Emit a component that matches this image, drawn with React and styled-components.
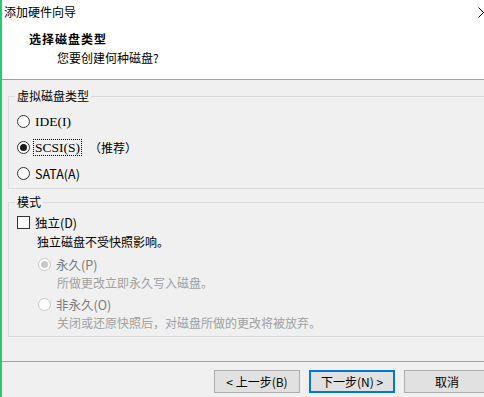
import styled, { createGlobalStyle } from "styled-components";

const GlobalStyle = createGlobalStyle`
  html, body {
    margin: 0;
    padding: 0;
    background: #f0f0f0;
    overflow: hidden;
  }
  body {
    font-family: "Noto Sans CJK SC", "Microsoft YaHei", sans-serif;
    font-size: 12px;
    color: #000;
  }
`;

const Window = styled.div`
  width: 500px;
  height: 397px;
  box-sizing: border-box;
  border-left: 2px solid #1fcf6e;
  background: #f0f0f0;
  display: flex;
  flex-direction: column;
  overflow: hidden;
`;

const TitleBar = styled.div`
  height: 24px;
  background: #fff;
  display: flex;
  align-items: center;
  justify-content: space-between;
  padding: 0 11px 0 2px;
  line-height: 24px;
`;

const Header = styled.div`
  height: 56px;
  box-sizing: border-box;
  background: #fff;
  padding: 7px 0 0 27px;
  border-bottom: 1px solid #a0a0a0;
`;

const HeadTitle = styled.div`
  font-weight: bold;
  line-height: 16px;
  letter-spacing: 1px;
`;

const HeadSub = styled.div`
  margin: 3px 0 0 28px;
  line-height: 16px;
`;

const Content = styled.div`
  padding: 0 6px;
`;

const Group = styled.fieldset`
  margin: ${({ $first }) => ($first ? "8px" : "5px")} 0 0;
  padding: ${({ $first }) => ($first ? "4px 0 2px 8px" : "2px 0 4px 8px")};
  border: 1px solid #dcdcdc;
  min-width: 0;
`;

const Legend = styled.legend`
  padding: 0 2px;
  margin-left: -2px;
  line-height: 16px;
`;

const Row = styled.div`
  display: flex;
  align-items: center;
  gap: 3px;
  height: ${({ $h }) => $h || 20}px;
`;

const Radio = styled.span`
  width: 13px;
  height: 13px;
  box-sizing: border-box;
  border-radius: 50%;
  border: 1px solid ${({ $disabled }) => ($disabled ? "#c8c8c8" : "#333")};
  background: #fff;
  display: inline-flex;
  align-items: center;
  justify-content: center;
  flex: none;

  &::after {
    content: "";
    width: 7px;
    height: 7px;
    border-radius: 50%;
    background: ${({ $disabled }) => ($disabled ? "#c8c8c8" : "#1a1a1a")};
    display: ${({ $checked }) => ($checked ? "block" : "none")};
  }
`;

const Checkbox = styled.span`
  width: 13px;
  height: 13px;
  box-sizing: border-box;
  border: 1px solid #333;
  background: #fff;
  flex: none;
`;

const Label = styled.span`
  font-family: ${({ $serif }) =>
    $serif ? '"Liberation Serif", "Noto Sans CJK SC", serif' : "inherit"};
  font-size: ${({ $serif }) => ($serif ? "13.5px" : "12.5px")};
  color: ${({ $disabled }) => ($disabled ? "#7a7a7a" : "#000")};
  line-height: 13px;
  padding: 1px 1px;
  border: 1px dotted ${({ $focus }) => ($focus ? "#000" : "transparent")};
`;

const Hint = styled.span`
  margin-left: 4px;
`;

const Note = styled.div`
  margin-left: 20px;
  line-height: 20px;
  height: 20px;
`;

const Options = styled.div`
  margin-left: 21px;
`;

const Option = styled.div`
  margin-top: 2px;
`;

const Desc = styled.div`
  padding-left: 19px;
  line-height: 18px;
  height: 18px;
  color: #a0a0a0;
  white-space: nowrap;
`;

const Footer = styled.div`
  margin-top: auto;
  border-top: 1px solid #a0a0a0;
  padding: 8px 10px 4px;
  display: flex;
  justify-content: flex-end;
  gap: 9px;
`;

const Button = styled.button`
  width: 86px;
  height: 23px;
  box-sizing: border-box;
  padding: 0;
  background: #e1e1e1;
  border: ${({ $default }) => ($default ? "2px solid #0078d7" : "1px solid #adadad")};
  font-family: inherit;
  font-size: 12px;
  color: #000;
  display: flex;
  align-items: center;
  justify-content: center;
`;

const CloseIcon = () => (
  <svg width="11" height="11" viewBox="0 0 11 11">
    <path d="M0.5 0.5 L10.5 10.5 M10.5 0.5 L0.5 10.5" stroke="#000" strokeWidth="1" fill="none" />
  </svg>
);

export default function App() {
  return (
    <>
      <GlobalStyle />
      <Window>
        <TitleBar>
          <span>添加硬件向导</span>
          <CloseIcon />
        </TitleBar>

        <Header>
          <HeadTitle>选择磁盘类型</HeadTitle>
          <HeadSub>您要创建何种磁盘?</HeadSub>
        </Header>

        <Content>
          <Group $first>
            <Legend>虚拟磁盘类型</Legend>
            <Row $h={26}>
              <Radio />
              <Label $serif>IDE(I)</Label>
            </Row>
            <Row $h={26}>
              <Radio $checked />
              <Label $serif $focus>SCSI(S)</Label>
              <Hint>（推荐）</Hint>
            </Row>
            <Row $h={26}>
              <Radio />
              <Label>SATA(A)</Label>
            </Row>
          </Group>

          <Group>
            <Legend>模式</Legend>
            <Row>
              <Checkbox />
              <Label>独立(D)</Label>
            </Row>
            <Note>独立磁盘不受快照影响。</Note>
            <Options>
              <Option>
                <Row>
                  <Radio $checked $disabled />
                  <Label $disabled>永久(P)</Label>
                </Row>
                <Desc>所做更改立即永久写入磁盘。</Desc>
              </Option>
              <Option>
                <Row>
                  <Radio $disabled />
                  <Label $disabled>非永久(O)</Label>
                </Row>
                <Desc>关闭或还原快照后，对磁盘所做的更改将被放弃。</Desc>
              </Option>
            </Options>
          </Group>
        </Content>

        <Footer>
          <Button>&lt; 上一步(B)</Button>
          <Button $default>下一步(N) &gt;</Button>
          <Button>取消</Button>
        </Footer>
      </Window>
    </>
  );
}
